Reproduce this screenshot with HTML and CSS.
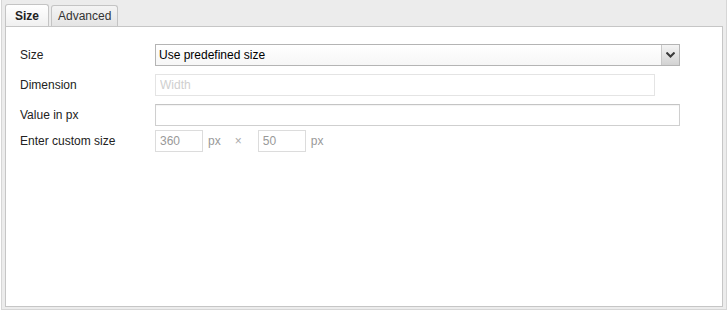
FILE: index.html
```html
<!DOCTYPE html>
<html lang="en">
<head>
    <meta charset="UTF-8">
    <title>Size</title>
    <link rel="stylesheet" href="styles.css">
</head>
<body>

    <div class="dialog">
        <div class="tabs">
            <div class="tab active">Size</div>
            <div class="tab">Advanced</div>
        </div>

        <div class="panel">
            <div class="row">
                <label>Size</label>
                <div class="select">
                    <span class="select-value">Use predefined size</span>
                    <span class="select-button">
                        <svg width="9" height="6" viewBox="0 0 9 6"><path d="M0.5 0.5 L4.5 4.5 L8.5 0.5" fill="none" stroke="#3a3a3a" stroke-width="2"/></svg>
                    </span>
                </div>
            </div>
            <div class="row">
                <label>Dimension</label>
                <input class="field narrow" type="text" placeholder="Width" disabled>
            </div>
            <div class="row">
                <label>Value in px</label>
                <input class="field" type="text">
            </div>
            <div class="row custom">
                <label>Enter custom size</label>
                <div class="size-group">
                    <input class="field small" type="text" value="360" disabled>
                    <span class="unit">px</span>
                    <span class="times">&times;</span>
                    <input class="field small" type="text" value="50" disabled>
                    <span class="unit">px</span>
                </div>
            </div>
        </div>
    </div>

</body>
</html>
```

FILE: styles.css
```css
body {
    margin: 0;
    background-color: #fff;
    font-family: "Liberation Sans", Arial, sans-serif;
    font-size: 12px;
    color: #222;
}
.dialog {
    margin: -1px 1px 0 1px;
    height: 311px;
    box-sizing: border-box;
    border: 1px solid #d6d6d6;
    background-color: #ececec;
    padding: 0 3px 2px 3px;
    display: flex;
    flex-direction: column;
}
.tabs {
    display: flex;
    align-items: flex-end;
    height: 26px;
    gap: 2px;
}
.tab {
    border: 1px solid #c4c4c4;
    border-bottom: none;
    border-radius: 3px 3px 0 0;
    background: linear-gradient(#f4f4f4, #e4e4e4);
    color: #333;
    height: 21px;
    line-height: 21px;
    padding: 0 6px;
    box-sizing: border-box;
}
.tab.active {
    height: 22px;
    line-height: 23px;
    background: linear-gradient(#ffffff, #f0f0f0);
    font-weight: bold;
    color: #222;
    padding: 0 9px;
}
.panel {
    flex: 1;
    border: 1px solid #c6c6c6;
    background-color: #fff;
    padding: 17px 14px 0 14px;
}
.row {
    display: grid;
    grid-template-columns: 135px auto;
    align-items: center;
    height: 22px;
    margin-bottom: 8px;
}
.row.custom {
    margin-top: -4px;
}
.row label {
    color: #222;
}
.select {
    width: 525px;
    height: 22px;
    box-sizing: border-box;
    border: 1px solid #b4b4b4;
    background: linear-gradient(#ffffff, #f6f6f6);
    display: flex;
    align-items: center;
}
.select-value {
    flex: 1;
    padding-left: 3px;
    color: #000;
}
.select-button {
    width: 17px;
    height: 20px;
    border-left: 1px solid #c8c8c8;
    background: linear-gradient(#f4f4f4, #d2d2d2);
    display: flex;
    align-items: center;
    justify-content: center;
}
.field {
    width: 525px;
    height: 22px;
    box-sizing: border-box;
    border: 1px solid #cfcfcf;
    border-top-color: #c4c4c4;
    box-shadow: inset 0 1px 1px rgba(0,0,0,0.05);
    background-color: #fff;
    font-family: inherit;
    font-size: 12px;
    padding: 0 4px;
    margin: 0;
    color: #222;
}
.field:disabled {
    border-color: #e4e4e4;
    box-shadow: none;
    background-color: #fff;
    color: #999;
}
.field::placeholder {
    color: #cfcfcf;
}
.field.narrow {
    width: 500px;
}
.field.small {
    width: 48px;
    border-color: #dcdcdc;
}
.size-group {
    display: flex;
    align-items: center;
}
.unit {
    color: #999;
    margin: 0 0 0 5px;
}
.times {
    color: #aaa;
    margin: 0 16px 0 14px;
}
```
